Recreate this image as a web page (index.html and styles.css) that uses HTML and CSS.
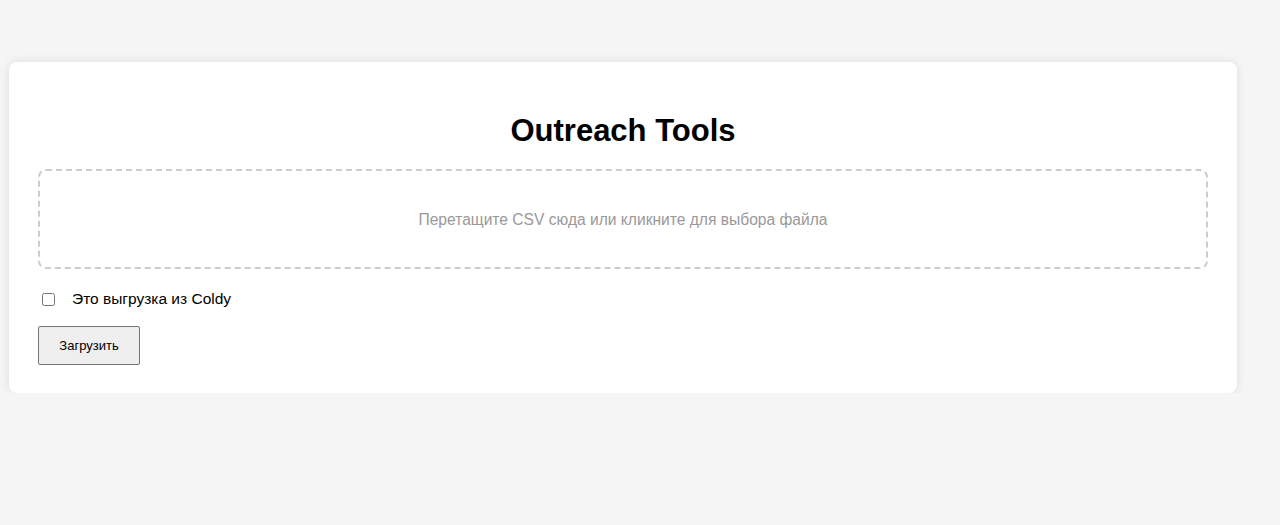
FILE: index.html
```html
<!DOCTYPE html>
<html lang="ru">
<head>
    <meta charset="UTF-8">
    <meta name="viewport" content="width=device-width, initial-scale=1.0">
    <title>Outreach Tools</title>
    <link rel="stylesheet" href="styles.css">
</head>
<body>
    <div class="container">
        <h1>Outreach Tools</h1>
        <div id="dropZone" class="drop-zone">Перетащите CSV сюда или кликните для выбора файла</div>
        <label class="check-row">
            <input type="checkbox" id="coldy">
            <span>Это выгрузка из Coldy</span>
        </label>
        <button id="upload">Загрузить</button>
    </div>
</body>
</html>
```

FILE: styles.css
```css
body {
    background: #f5f5f5;
    font-family: "Liberation Sans", Arial, sans-serif;
    margin: 0;
    padding: 62px 43px 0 9px;
}
.container {
    background: white;
    padding: 30px 29px 28px 29px;
    border-radius: 8px;
    box-shadow: 0 0 10px rgba(0, 0, 0, 0.1);
}
h1 {
    text-align: center;
    font-size: 31px;
    margin: 21px 0 20px 0;
}
.drop-zone {
    border: 2px dashed #ccc;
    border-radius: 8px;
    padding: 40px 20px 38px 20px;
    text-align: center;
    color: #999;
    font-size: 15.6px;
    line-height: 18px;
}
.check-row {
    display: flex;
    align-items: center;
    margin: 21px 0 18px 0;
    font-size: 15.5px;
}
.check-row input {
    margin: 0 17px 0 4px;
    width: 13px;
    height: 13px;
}
button {
    padding: 11px 20px;
    width: 102px;
    font-size: 13px;
    font-family: "Liberation Sans", Arial, sans-serif;
    border: 1px solid #767676;
    border-radius: 2px;
    background: #efefef;
    color: black;
    cursor: pointer;
}
```
